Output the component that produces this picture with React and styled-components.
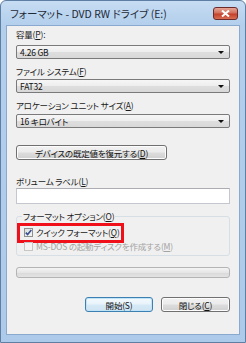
import React from 'react'
import styled, { createGlobalStyle } from 'styled-components'

const GlobalStyle = createGlobalStyle`
  html, body {
    margin: 0;
    padding: 0;
    background: #ffffff;
  }
  body {
    font-family: "Noto Sans CJK JP", "Noto Sans", sans-serif;
    font-feature-settings: "palt";
  }
`;

const StWindow = styled.div`
  width: 246px;
  height: 343px;
  box-sizing: border-box;
  border: 1px solid #5e7ea3;
  border-radius: 6px 6px 0 0;
  background: linear-gradient(180deg, #c6dcf2 0px, #b3cfec 24px, #adcaea 100%);
  display: flex;
  flex-direction: column;
`;

const StTitleBar = styled.div`
  height: 24px;
  display: flex;
  align-items: center;
  justify-content: space-between;
  padding: 2px 7px 0 9px;
  box-sizing: border-box;
`;

const StTitle = styled.div`
  font-size: 10.5px;
  color: #1d2a38;
  line-height: 12px;
  white-space: nowrap;
`;

const StCloseBtn = styled.div`
  width: 23px;
  height: 11px;
  border: 1px solid #6d2a2a;
  border-radius: 3px;
  background: linear-gradient(180deg, #e6a595 0%, #d2705e 45%, #c4402b 55%, #d86e55 100%);
  display: flex;
  align-items: center;
  justify-content: center;
  margin-top: -1px;
`;

const StClient = styled.div`
  flex: 1;
  margin: 0 5px 7px 5px;
  border: 1px solid #8aa9cf;
  background: #f0f0f0;
  padding: 2px 9px 0 9px;
  display: flex;
  flex-direction: column;
  font-size: 8.5px;
  letter-spacing: -0.2px;
`;

const StLabel = styled.div`
  line-height: 12px;
  height: 12px;
  color: #1a1a1a;
  margin-top: ${p => p.$mt || 0}px;
  white-space: nowrap;
`;

const StKey = styled.span`
  text-decoration: underline;
`;

const StSelect = styled.div`
  height: 14px;
  box-sizing: border-box;
  margin-top: ${p => p.$mt || 0}px;
  border: 1px solid #7a7a7a;
  border-radius: 2px;
  background: linear-gradient(180deg, #f6f6f6 0%, #eeeeee 48%, #dedede 52%, #d8d8d8 100%);
  display: flex;
  align-items: center;
  justify-content: space-between;
  padding: 0 5px 0 3px;
  color: #111;
`;

const StArrow = styled.div`
  width: 0;
  height: 0;
  border-left: 3px solid transparent;
  border-right: 3px solid transparent;
  border-top: 3px solid #111;
`;

const StButton = styled.div`
  height: 15px;
  width: ${p => p.$w}px;
  box-sizing: border-box;
  margin-top: ${p => p.$mt || 0}px;
  border: 1px solid ${p => (p.$default ? '#3c7fb1' : '#707070')};
  border-radius: 3px;
  box-shadow: inset 0 0 0 1px ${p => (p.$default ? '#bfe3f7' : '#fcfcfc')};
  background: ${p => (p.$default
    ? 'linear-gradient(180deg, #f4fafd 0%, #e8f3fa 48%, #d6e9f6 52%, #cfe3f2 100%)'
    : 'linear-gradient(180deg, #f2f2f2 0%, #ebebeb 48%, #dddddd 52%, #cfcfcf 100%)')};
  display: flex;
  align-items: center;
  justify-content: center;
  color: #111;
  white-space: nowrap;
`;

const StTextBox = styled.div`
  height: 16px;
  box-sizing: border-box;
  margin-top: ${p => p.$mt || 0}px;
  border: 1px solid #c4c8ce;
  border-top-color: #abadb3;
  background: #ffffff;
`;

const StGroup = styled.fieldset`
  margin: ${p => p.$mt || 0}px 0 0 0;
  padding: 4px 6px 3px 7px;
  border: 1px solid #d5dfe5;
  border-radius: 3px;
  min-width: 0;
  position: relative;
`;

const StLegend = styled.legend`
  line-height: 12px;
  padding: 0 1px;
  margin-left: -2px;
  color: #1a1a1a;
`;

const StCheckRow = styled.div`
  height: 12px;
  margin-top: ${p => p.$mt || 0}px;
  display: flex;
  align-items: center;
  gap: 3px;
  color: ${p => (p.$disabled ? '#a3a3a3' : '#1a1a1a')};
  white-space: nowrap;
  position: relative;
`;

const StCheckBox = styled.div`
  width: 9px;
  height: 9px;
  box-sizing: border-box;
  border: 1px solid ${p => (p.$disabled ? '#c6c6c6' : '#8e8f8f')};
  background: ${p => (p.$disabled ? '#f4f4f4' : 'linear-gradient(135deg, #dcdcdc 0%, #f6f6f6 100%)')};
  display: flex;
  align-items: center;
  justify-content: center;
`;

const StHighlight = styled.div`
  position: absolute;
  left: -7px;
  top: -3px;
  width: 107px;
  height: 20px;
  box-sizing: border-box;
  border: 3px solid #f0101a;
  pointer-events: none;
`;

const StProgress = styled.div`
  height: 11px;
  margin-top: ${p => p.$mt || 0}px;
  box-sizing: border-box;
  border: 1px solid #b4b4b4;
  border-radius: 3px;
  background: linear-gradient(180deg, #f4f4f4 0%, #e6e6e6 50%, #d9d9d9 51%, #e3e3e3 100%);
`;

const StFooter = styled.div`
  display: flex;
  justify-content: flex-end;
  gap: 8px;
  margin-top: ${p => p.$mt || 0}px;
`;

function Combo({ value, mt }) {
  return (
    <StSelect $mt={mt}>
      <span>{value}</span>
      <StArrow />
    </StSelect>
  );
}

export default function App() {
  return (
    <>
      <GlobalStyle />
      <StWindow>
        <StTitleBar>
          <StTitle>フォーマット - DVD RW ドライブ (E:)</StTitle>
          <StCloseBtn>
            <svg width="9" height="7" viewBox="0 0 9 7">
              <path d="M1 0.5 L8 6.5 M8 0.5 L1 6.5" stroke="#ffffff" strokeWidth="2" />
            </svg>
          </StCloseBtn>
        </StTitleBar>
        <StClient>
          <StLabel>容量(<StKey>P</StKey>):</StLabel>
          <Combo value="4.26 GB" mt={5} />
          <StLabel $mt={6}>ファイル システム(<StKey>F</StKey>)</StLabel>
          <Combo value="FAT32" mt={2} />
          <StLabel $mt={6}>アロケーション ユニット サイズ(<StKey>A</StKey>)</StLabel>
          <Combo value="16 キロバイト" mt={3} />
          <StButton $mt={17} $w={151}>デバイスの既定値を復元する(<StKey>D</StKey>)</StButton>
          <StLabel $mt={15}>ボリューム ラベル(<StKey>L</StKey>)</StLabel>
          <StTextBox $mt={1} />
          <StGroup $mt={6}>
            <StLegend>フォーマット オプション(<StKey>O</StKey>)</StLegend>
            <StCheckRow>
              <StCheckBox>
                <svg width="7" height="7" viewBox="0 0 7 7">
                  <path d="M0.8 3.6 L2.6 5.6 L6.3 0.9" stroke="#3b4f8f" strokeWidth="1.6" fill="none" />
                </svg>
              </StCheckBox>
              <span>クイック フォーマット(<StKey>Q</StKey>)</span>
              <StHighlight />
            </StCheckRow>
            <StCheckRow $mt={2} $disabled>
              <StCheckBox $disabled />
              <span>MS-DOS の起動ディスクを作成する(<StKey>M</StKey>)</span>
            </StCheckRow>
          </StGroup>
          <StProgress $mt={11} />
          <StFooter $mt={19}>
            <StButton $w={68} $default>開始(S)</StButton>
            <StButton $w={69}>閉じる(<StKey>C</StKey>)</StButton>
          </StFooter>
        </StClient>
      </StWindow>
    </>
  );
}
